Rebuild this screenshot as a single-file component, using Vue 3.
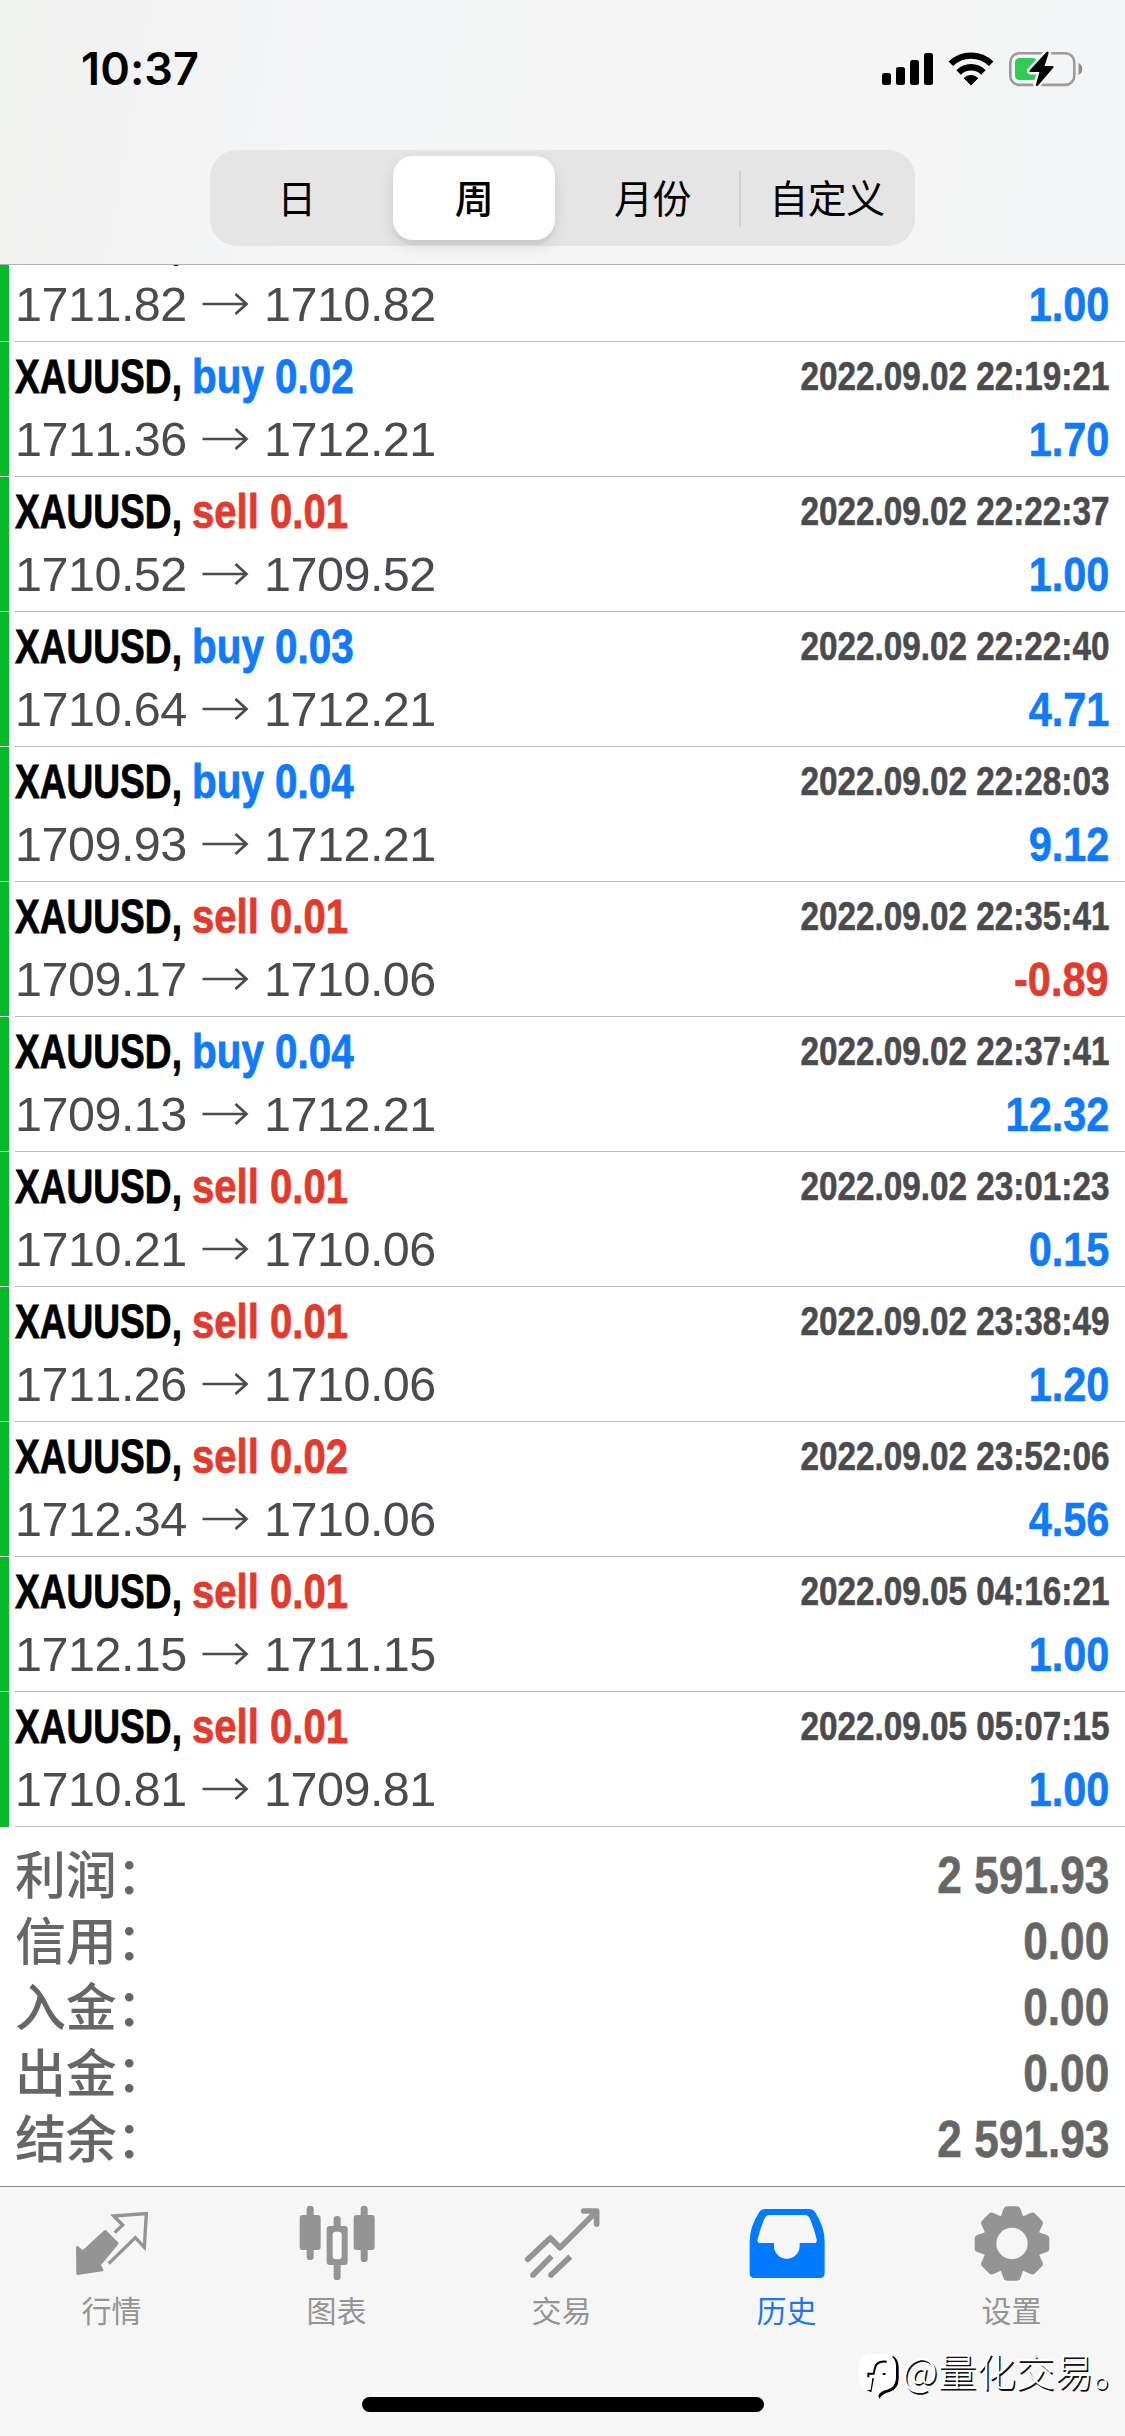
<script setup>
const periods = ['日', '周', '月份', '自定义']
const activePeriod = '周'

const deals = [
  { side: 'sell', lots: '0.01', time: '2022.09.02 22:18:37', from: '1711.82', to: '1710.82', profit: '1.00' },
  { side: 'buy', lots: '0.02', time: '2022.09.02 22:19:21', from: '1711.36', to: '1712.21', profit: '1.70' },
  { side: 'sell', lots: '0.01', time: '2022.09.02 22:22:37', from: '1710.52', to: '1709.52', profit: '1.00' },
  { side: 'buy', lots: '0.03', time: '2022.09.02 22:22:40', from: '1710.64', to: '1712.21', profit: '4.71' },
  { side: 'buy', lots: '0.04', time: '2022.09.02 22:28:03', from: '1709.93', to: '1712.21', profit: '9.12' },
  { side: 'sell', lots: '0.01', time: '2022.09.02 22:35:41', from: '1709.17', to: '1710.06', profit: '-0.89' },
  { side: 'buy', lots: '0.04', time: '2022.09.02 22:37:41', from: '1709.13', to: '1712.21', profit: '12.32' },
  { side: 'sell', lots: '0.01', time: '2022.09.02 23:01:23', from: '1710.21', to: '1710.06', profit: '0.15' },
  { side: 'sell', lots: '0.01', time: '2022.09.02 23:38:49', from: '1711.26', to: '1710.06', profit: '1.20' },
  { side: 'sell', lots: '0.02', time: '2022.09.02 23:52:06', from: '1712.34', to: '1710.06', profit: '4.56' },
  { side: 'sell', lots: '0.01', time: '2022.09.05 04:16:21', from: '1712.15', to: '1711.15', profit: '1.00' },
  { side: 'sell', lots: '0.01', time: '2022.09.05 05:07:15', from: '1710.81', to: '1709.81', profit: '1.00' },
]

const totals = [
  { label: '利润', value: '2 591.93' },
  { label: '信用', value: '0.00' },
  { label: '入金', value: '0.00' },
  { label: '出金', value: '0.00' },
  { label: '结余', value: '2 591.93' },
]
</script>

<template>
  <div class="screen">
    <header class="header">
      <div class="status">
        <span class="clock">10:37</span>
        <svg class="status-icons" width="204" height="38" viewBox="0 0 204 38">
          <g fill="#000">
            <rect x="2" y="23" width="9" height="12" rx="2.5" />
            <rect x="16" y="17" width="9" height="18" rx="2.5" />
            <rect x="30" y="10" width="9" height="25" rx="2.5" />
            <rect x="44" y="3" width="9" height="32" rx="2.5" />
            <path d="M91 35 L84.2 28.2 A9.8 9.8 0 0 1 97.8 28.2 Z" stroke="#000" stroke-width="1" stroke-linejoin="round" />
          </g>
          <g fill="none" stroke="#000" stroke-width="6.4">
            <path d="M78.6 22.4 A17.6 17.6 0 0 1 103.4 22.4" />
            <path d="M70.8 13.8 A29 29 0 0 1 111.2 13.8" />
          </g>
          <rect x="130.3" y="3.3" width="64" height="31.6" rx="9" fill="none" stroke="#9b9b9b" stroke-width="2.6" />
          <path d="M198.500 13 C203.500 14.500 203.500 23.500 198.500 25 Z" fill="#8e8e8e" />
          <rect x="135" y="8" width="22" height="22" rx="4.500" fill="#31cc56" />
          <path
            d="M167 1.500 L149.500 20.500 Q149 22 150.500 22 H159.500 L155.800 35 Q156.500 37 158 35.500 L173.500 17.500 Q174 16 172.500 16 H164.500 L168.700 3 Q168.500 1 167 1.500 Z"
            fill="#000" stroke="#f5f5f5" stroke-width="5" paint-order="stroke"
          />
        </svg>
      </div>
      <div class="segments">
        <div v-for="p in periods" :key="p" class="segment" :class="{ active: p === activePeriod }">
          <span>{{ p }}</span>
        </div>
      </div>
    </header>

    <main class="history">
      <div class="deals">
        <article v-for="(d, i) in deals" :key="i" class="deal">
          <div class="title">
            <span class="symbol"><b>XAUUSD,</b></span>
            <b class="op" :class="d.side">{{ d.side }} {{ d.lots }}</b>
            <b class="time">{{ d.time }}</b>
          </div>
          <div class="prices">
            <span class="price">{{ d.from }}</span>
            <svg class="arrow" width="76" height="24" viewBox="0 0 76 24">
              <path d="M14.500 12 H58 M47.500 2 L58.500 12 L47.500 22" fill="none" stroke="#4b4b4f" stroke-width="2.700" />
            </svg>
            <span class="price">{{ d.to }}</span>
            <b class="profit" :class="{ loss: d.profit.startsWith('-') }">{{ d.profit }}</b>
          </div>
        </article>
      </div>
      <div class="totals">
        <div v-for="t in totals" :key="t.label" class="total">
          <span class="total-label">{{ t.label }}：</span>
          <b class="total-value">{{ t.value }}</b>
        </div>
      </div>
    </main>

    <footer class="footer">
      <nav class="tabs">
        <div class="tab">
          <svg width="76" height="77" viewBox="219 75 228 231">
            <path d="M313 154 L349 190 L295 255 L303 270 L230 281 L229 202 L245 216 Z" fill="#949494" stroke="#949494" stroke-width="8" stroke-linejoin="round" />
            <path d="M341 158 L365 135 L338 108 L436 101 L430 202 L403 173 L323 251" fill="none" stroke="#949494" stroke-width="10" />
          </svg>
          <span>行情</span>
        </div>
        <div class="tab">
          <svg width="76" height="77" viewBox="895 75 228 231">
            <g fill="#949494">
              <rect x="897" y="105" width="63" height="105" rx="9" />
              <rect x="918" y="77" width="21" height="163" rx="10" />
              <rect x="1059" y="105" width="63" height="105" rx="9" />
              <rect x="1080" y="77" width="21" height="169" rx="10" />
              <rect x="978" y="138" width="63" height="117" rx="9" />
              <rect x="999" y="108" width="21" height="192" rx="10" />
            </g>
            <rect x="996" y="155" width="27" height="83" rx="9" fill="#fafafa" />
          </svg>
          <span>图表</span>
        </div>
        <div class="tab">
          <svg width="76" height="77" viewBox="190 75 228 231">
            <g fill="none" stroke="#949494" stroke-width="17" stroke-linejoin="round">
              <path d="M201 238 L269 174 L298 203 L405 97" stroke-linecap="round" />
              <path d="M369 93 H408 V132" stroke-linecap="round" />
              <path d="M273 229 L217 285 M329 230 L271 285" />
            </g>
            <circle cx="217" cy="285" r="8.500" fill="#949494" />
            <circle cx="271" cy="285" r="8.500" fill="#949494" />
          </svg>
          <span>交易</span>
        </div>
        <div class="tab current">
          <svg width="76" height="77" viewBox="865 75 228 231">
            <path d="M914 87 H1045 Q1058 87 1063 96 Q1092 140 1092 185 V280 Q1092 294 1078 294 H881 Q867 294 867 280 V185 Q867 140 896 96 Q901 87 914 87 Z" fill="#007aff" />
            <path d="M926 105 H1033 Q1043 106 1048 116 Q1060 144 1068 178 Q1070 189 1060 189 H1017 V198 A38 38 0 0 1 940 198 V189 H899 Q889 189 891 178 Q899 144 911 116 Q916 106 926 105 Z" fill="#f6f6f6" />
          </svg>
          <span>历史</span>
        </div>
        <div class="tab">
          <svg width="76" height="77" viewBox="-114 -115.500 228 231">
            <g fill="#949494">
              <circle r="84" />
              <path
                v-for="a in 8" :key="a" :transform="`rotate(${a * 45})`"
                d="M-39 -70 Q-32 -84 -26 -102 Q-23 -112 -14 -112 H14 Q23 -112 26 -102 Q32 -84 39 -70 Z"
              />
            </g>
            <circle r="47" fill="#f6f6f6" />
          </svg>
          <span>设置</span>
        </div>
      </nav>
      <div class="home-bar"></div>
    </footer>

    <div class="watermark">
      <svg width="42" height="50" viewBox="21 21 126 150">
        <path d="M128 32 Q146 42 146 66 V102 Q145 132 120 140 Q98 144 88 161 L85 150 L100 120 Z" fill="#000" />
        <path d="M62 27 H102 Q136 29 138 62 V100 Q136 128 112 134 Q92 138 84 151 L76 132 L62 140 Q28 132 26 100 V62 Q28 29 62 27 Z" fill="#fff" />
        <path d="M110 50 Q78 46 74 72 L71 86 H55 V97" fill="none" stroke="#000" stroke-width="6" />
        <path d="M72 100 L64 142 L50 136 L62 134 L67 100 Z" fill="#000" />
        <rect x="98" y="84" width="9" height="6" rx="2" fill="#000" />
      </svg>
      <span>@量化交易。</span>
    </div>
  </div>
</template>

<style>
body {
  margin: 0;
}
</style>

<style scoped>
.screen {
  position: relative;
  display: flex;
  flex-direction: column;
  width: 1125px;
  height: 2436px;
  overflow: hidden;
  background: #fff;
  font-family: "Liberation Sans", "Noto Sans CJK SC", sans-serif;
  font-kerning: none;
}

.header {
  box-sizing: border-box;
  height: 265px;
  flex: none;
  border-bottom: 1px solid #b0b0b0;
  background: linear-gradient(100deg, #eff1ee 0%, #f3f3f3 14%, #f4f5f7 28%, #f5f5f5 50%, #f5f5f5 80%, #f4f5f7 100%);
}

.status {
  display: flex;
  justify-content: space-between;
  align-items: center;
  height: 138px;
  padding: 0 41px 0 81px;
}

.clock {
  font: 600 45px/50px Inter, sans-serif;
  letter-spacing: 0.1px;
}

.segments {
  display: flex;
  width: 705px;
  height: 96px;
  margin: 12px 0 0 210px;
  border-radius: 27px;
  background: #e5e5e6;
}

.segment {
  display: flex;
  width: 173px;
  align-items: center;
  justify-content: center;
  padding-bottom: 5px;
  box-sizing: border-box;
  font: 400 39px/56px "Noto Sans CJK SC", sans-serif;
  letter-spacing: -0.5px;
}

.segment.active {
  width: 162px;
  margin: 6px 11px 6px 10px;
  border-radius: 20px;
  background: #fff;
  box-shadow: 0 6px 16px rgba(0, 0, 0, 0.1), 0 5px 1px rgba(0, 0, 0, 0.04);
  font-weight: 500;
}

.segment:last-child {
  width: 176px;
  background: linear-gradient(#cfcfd1, #cfcfd1) 0 50% / 2px 56px no-repeat;
}

.history {
  display: flex;
  flex-direction: column;
  height: 1921px;
  flex: none;
  overflow: hidden;
}

.deals {
  margin-top: -58px;
}

.deal {
  box-sizing: border-box;
  height: 135px;
  padding: 6px 16px 0 6px;
  border-left: 9px solid #08b82c;
  background: linear-gradient(#bebebe, #bebebe) 6px 100% / 100% 1px no-repeat;
}

.deal:not(:last-child) {
  border-image: linear-gradient(#08b82c 134px, #e6f5e8 134px) 0 0 0 9;
}

.title,
.prices {
  display: flex;
  align-items: center;
  height: 56px;
  white-space: nowrap;
}

.prices {
  height: 70px;
  font-size: 48.500px;
  line-height: 70px;
}

.title {
  font-size: 49px;
  line-height: 56px;
}

.symbol {
  width: 177px;
}

.symbol b {
  display: inline-block;
  transform: scaleX(0.757);
  transform-origin: 0 50%;
  -webkit-text-stroke: 0.8px currentColor;
}

.op {
  transform-origin: 0 50%;
  -webkit-text-stroke: 0.8px currentColor;
}

.op.buy {
  transform: scaleX(0.825);
}

.op.sell {
  transform: scaleX(0.818);
}

.buy,
.profit {
  color: #0f7bfb;
}

.sell,
.profit.loss {
  color: #e23b2e;
}

.time,
.profit,
.total-value {
  margin-left: auto;
  transform-origin: 100% 50%;
  -webkit-text-stroke: 0.6px currentColor;
}

.time {
  color: #4b4b4f;
  font-size: 40px;
  transform: scaleX(0.832);
}

.price {
  width: 173px;
  color: #4b4b4f;
  letter-spacing: -0.5px;
}

.arrow {
  flex: none;
}

.profit {
  transform: scaleX(0.855);
}

.totals {
  padding: 15px 16px 0 15px;
}

.total {
  display: flex;
  align-items: center;
  height: 66px;
  color: #666;
}

.total-label {
  height: 66px;
  font: 500 51px/60px "Noto Sans CJK SC", sans-serif;
  letter-spacing: -0.3px;
}

.total-value {
  font-size: 52px;
  line-height: 66px;
  transform: scaleX(0.85);
}

.footer {
  box-sizing: border-box;
  height: 250px;
  flex: none;
  border-top: 1px solid #8c8c8c;
  background: #f6f6f6;
}

.tabs {
  display: flex;
  height: 210px;
  margin: 0 1px 0 -1px;
}

.tab {
  display: flex;
  flex: 1;
  flex-direction: column;
  align-items: center;
  padding-top: 18px;
  color: #949494;
  font: 400 30px/44px "Noto Sans CJK SC", sans-serif;
}

.tab span {
  margin-top: 5px;
}

.tab.current {
  color: #1b75f5;
}

.home-bar {
  width: 402px;
  height: 15px;
  margin: 0 auto;
  border-radius: 8px;
  background: #000;
}

.watermark {
  position: absolute;
  left: 857px;
  top: 2352px;
  display: flex;
  gap: 3px;
  color: #fff;
  font: 300 39px/34px "Noto Sans CJK SC", sans-serif;
  text-shadow: 1.500px 1.500px 0.500px #111;
  white-space: nowrap;
}
</style>
